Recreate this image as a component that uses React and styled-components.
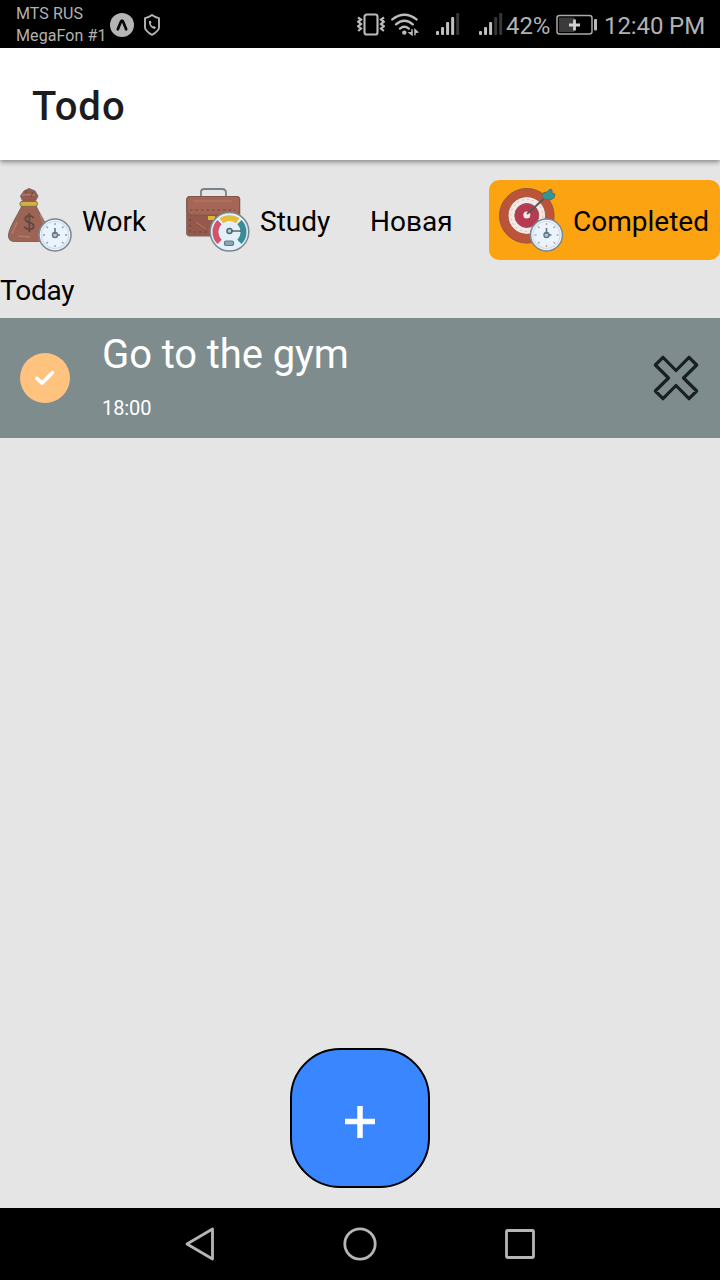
import React from "react";
import styled, { createGlobalStyle } from "styled-components";

const GlobalStyle = createGlobalStyle`
  * { box-sizing: border-box; }
  body { margin: 0; background: #e5e5e5; }
`;

const Screen = styled.div`
  display: flex;
  flex-direction: column;
  width: 720px;
  height: 1280px;
  overflow: hidden;
  background: #e5e5e5;
  color: #000;
  font-family: Roboto, "Liberation Sans", sans-serif;
`;

const StatusBar = styled.div`
  display: flex;
  align-items: center;
  flex: none;
  height: 48px;
  padding: 2px 0 0 16px;
  background: #000;
  color: #b2b2b2;
`;

const Carriers = styled.div`
  width: 94px;
  font-size: 16px;
  line-height: 22px;
  letter-spacing: 0.1px;
  white-space: nowrap;
`;

const Glyph = styled.svg`
  display: block;
  flex: none;
  margin-left: ${(p) => p.$gap || 0}px;
`;

const Spacer = styled.div`
  flex: 1;
`;

const StatusText = styled.span`
  flex: none;
  width: ${(p) => p.$width}px;
  padding: 1px 0 0 ${(p) => p.$inset}px;
  font-size: 24px;
  letter-spacing: -0.1px;
  line-height: 32px;
  white-space: nowrap;
`;

const Header = styled.header`
  display: flex;
  align-items: center;
  flex: none;
  height: 112px;
  padding: 6px 32px 0;
  background: #fff;
  box-shadow: 0 2px 5px rgba(0, 0, 0, 0.42);
`;

const Title = styled.h1`
  margin: 0;
  color: #1c1c1e;
  font-size: 40px;
  font-weight: 500;
  line-height: 48px;
  letter-spacing: 1px;
`;

const Tabs = styled.nav`
  display: flex;
  flex: none;
  height: 80px;
  margin: 20px 0 0 -2px;
`;

const Tab = styled.div`
  display: flex;
  flex: none;
  gap: 10px;
  width: ${(p) => p.$width}px;
  height: 80px;
  margin-right: ${(p) => p.$after || 0}px;
  padding: 8px 10px;
  border-radius: 10px;
  background: ${(p) => (p.$active ? "#fca311" : "transparent")};
`;

const TabLabel = styled.span`
  padding-top: 17px;
  font-size: 28px;
  line-height: 33px;
  white-space: nowrap;
`;

const SectionTitle = styled.h2`
  flex: none;
  height: 58px;
  margin: 0;
  padding-top: 14px;
  font-size: 28px;
  font-weight: 400;
  line-height: 33px;
  letter-spacing: -0.2px;
`;

const Task = styled.div`
  display: flex;
  align-items: center;
  flex: none;
  height: 120px;
  padding: 0 20px;
  background: #7f8c8d;
  color: #fff;
`;

const Check = styled.div`
  display: flex;
  align-items: center;
  justify-content: center;
  width: 50px;
  height: 50px;
  border-radius: 50%;
  background: #ffc37f;
`;

const TaskBody = styled.div`
  flex: 1;
  align-self: stretch;
  padding: 13px 0 0 32px;
`;

const TaskName = styled.div`
  font-size: 40px;
  line-height: 48px;
  letter-spacing: -0.1px;
`;

const TaskTime = styled.div`
  margin-top: 17px;
  font-size: 20px;
  line-height: 24px;
  letter-spacing: -0.1px;
`;

const Content = styled.main`
  display: flex;
  flex: 1;
  align-items: flex-end;
  justify-content: center;
  padding-bottom: 20px;
`;

const AddButton = styled.button`
  display: flex;
  align-items: center;
  justify-content: center;
  width: 140px;
  height: 140px;
  padding: 8px 0 0;
  border: 2px solid #000;
  border-radius: 50px;
  background: #3a86ff;
`;

const NavBar = styled.footer`
  display: flex;
  align-items: center;
  justify-content: center;
  gap: 120px;
  flex: none;
  height: 72px;
  background: #000;
`;

const ExpoIcon = () => (
  <Glyph width="24" height="24" viewBox="0 0 24 24">
    <circle cx="12" cy="12" r="12" fill="#b5b5b5" />
    <path d="M7.8 16.3 11 8.5q1-1.7 2 0l3.2 7.8" fill="none" stroke="#080808" strokeWidth="2.7" strokeLinecap="round" strokeLinejoin="round" />
  </Glyph>
);

const ShieldIcon = () => (
  <Glyph $gap={9} width="18" height="24" viewBox="0 0 18 24" fill="none" stroke="#b5b5b5">
    <path d="M9 2c2 1.6 4 2.5 7 3.1v9.4c0 3-3 5-7 7.4-4-2.4-7-4.4-7-7.4V5.1c3-.6 5-1.5 7-3.1Z" strokeWidth="1.9" strokeLinejoin="round" />
    <path d="M6.8 8c-.5 4 1.8 7 5.5 7.2" strokeWidth="1.5" />
    <path d="m6.8 8 .8 2.4M10 13.600l2.300 1.400" strokeWidth="2" />
  </Glyph>
);

const VibrateIcon = () => (
  <Glyph width="28" height="24" viewBox="0 0 28 24" fill="none" stroke="#bcbcbc">
    <rect x="7.5" y="1.5" width="13" height="20" rx="2.3" strokeWidth="2.1" />
    <path d="M1 4.500 4 6.500 1.200 8.800 4 11 1.200 13.300 4 15.600 1.200 18M27 4.500l-3 2 2.800 2.300L24 11l2.800 2.300-2.800 2.300 2.800 2.400" strokeWidth="2.200" />
  </Glyph>
);

const WifiIcon = () => (
  <Glyph $gap={6} width="28" height="24" viewBox="0 0 28 24" fill="none" stroke="#bcbcbc" strokeLinecap="round">
    <path d="M1.3 6.400Q13.400-3 25.500 6.400M5 11.300q8.400-7 16.800 0M9 15.600q4.400-3.600 8.800 0" strokeWidth="2.400" />
    <circle cx="13.300" cy="19.600" r="2.200" fill="#bcbcbc" stroke="none" />
    <path d="M21 16.800v5L18.500 19.800l2.500-.2M24 21.800v-5l2.500 2.300-2.500.5" strokeWidth="1.500" />
  </Glyph>
);

const SignalIcon = ({ gap, level }) => (
  <Glyph $gap={gap} width="24" height="24" viewBox="0 0 24 24">
    {[4, 8, 13, 18, 22].map((height, index) => (
      <rect
        key={height}
        x={index * 5.05}
        y={22 - height}
        width="3"
        height={height}
        rx="1"
        fill={index < level ? "#c1c1c1" : "#363636"}
      />
    ))}
  </Glyph>
);

const BatteryIcon = () => (
  <Glyph width="42" height="22" viewBox="0 0 42 22">
    <rect x="1" y="1.5" width="35" height="18.5" rx="2.5" fill="none" stroke="#aaa" strokeWidth="1.5" />
    <rect x="3" y="3.5" width="15.5" height="14.5" fill="#3b3b3b" />
    <path d="M18.500 5.500v11M13 11h11" stroke="#d2d2d2" strokeWidth="2.800" />
    <rect x="38" y="5" width="3" height="11.5" rx="1" fill="#bbb" />
  </Glyph>
);

const Clock = ({ cx, cy, r, tick = "#8d9bab" }) => (
  <g transform={`translate(${cx} ${cy})`}>
    <circle r={r} fill="#eaf4ff" stroke="#7b858e" strokeWidth="1.5" />
    <circle r={r - 2.5} fill="none" stroke="#d0dce8" strokeWidth="1.2" />
    {[0, 45, 90, 135, 180, 225, 270, 315].map((angle) => (
      <path key={angle} d={`M0 ${-r + 4}v2`} transform={`rotate(${angle})`} stroke={tick} strokeWidth="1.3" />
    ))}
    <circle r="2.5" fill="#b6c7d8" stroke="#637382" strokeWidth="1.4" />
    <path d="M0-1v-6M2 0h3" stroke="#637382" strokeWidth="1.6" />
  </g>
);

const MoneyBagIcon = () => (
  <Glyph width="64" height="64" viewBox="0 0 64 64">
    <path d="M14 18C10 27 2 38 .7 46c-.7 5 1.7 7.5 6 7.5h30c5 0 6.500-4 4.500-9C38.500 36 32 27 28 18Z" fill="#9d6355" stroke="#7d6962" strokeWidth="1.2" />
    <path d="M15 14 12.500 8 16 3l5-2.500L27 3l3 5-3 6Z" fill="#965b4d" stroke="#7d6962" />
    <path d="M14 7.500c5-2 9 0 13-1M9 34 4 46m28-20 5 15M10 48l12 1" fill="none" stroke="#b17b6b" strokeWidth="1.5" />
    <path d="M18 2v4m7-2-2 5" stroke="#704840" />
    <rect x="12" y="13.5" width="17.5" height="4.8" rx="2" fill="#d5ad49" stroke="#846e42" />
    <path d="M25.300 30c-1-3-8-3-8 1 0 5 8.300 2 8.300 7 0 4.500-7.600 4.500-9 .5M21.300 25v19" fill="none" stroke="#62483f" strokeWidth="1.9" />
    <Clock cx={47} cy={47} r={16} />
  </Glyph>
);

const BriefcaseIcon = () => (
  <Glyph width="64" height="64" viewBox="0 0 64 64">
    <path d="M15 8V4q0-3 3-3h18q4 0 4 4v3" fill="none" stroke="#78828a" strokeWidth="1.8" />
    <rect x=".7" y="8.5" width="53" height="39.5" rx="3" fill="#95594b" stroke="#7d6962" strokeWidth="1.2" />
    <path d="M1 11q0-2.500 3-2.500h46.500q3 0 3 2.500v11q0 5-6 5H7q-6 0-6-5Z" fill="#a66655" stroke="#7d554b" />
    <path d="M4 22h45M4 31v13h20" fill="none" stroke="#6d453e" strokeWidth="1.2" strokeDasharray="2.5 3" />
    <path d="M7 13h39M10 34l10 7" stroke="#b37968" />
    <rect x="22" y="28" width="7" height="4" fill="#e1b431" />
    <circle cx="43.5" cy="43.8" r="19.3" fill="#e4f0f8" stroke="#7b8791" strokeWidth="1.5" />
    <g fill="none" strokeWidth="6">
      <path d="M35.300 32.800a14 14 0 0 1 16.400 0" stroke="#e6bd3b" />
      <path d="M33.600 34.100a14 14 0 0 0 0 19.800" stroke="#d15269" />
      <path d="M53.400 34.100a14 14 0 0 1 0 19.800" stroke="#388b97" />
    </g>
    <circle cx="43.5" cy="43" r="2.5" fill="#bad0df" stroke="#526477" strokeWidth="1.5" />
    <path d="M46 43h9" stroke="#395361" strokeWidth="1.3" />
    <rect x="38.5" y="53" width="9" height="4.5" rx="1.5" fill="#8ca5b9" stroke="#637889" strokeWidth="1.2" />
  </Glyph>
);

const TargetIcon = () => (
  <Glyph width="64" height="64" viewBox="0 0 64 64">
    <circle cx="27.8" cy="27.8" r="27.3" fill="#bd543a" stroke="#8c5940" />
    <circle cx="27.8" cy="27.5" r="18.8" fill="#f3e9e5" stroke="#a05a49" />
    <circle cx="27.8" cy="27.5" r="16" fill="none" stroke="#dfb5b3" strokeDasharray="2 3" />
    <circle cx="27.8" cy="27.5" r="12" fill="#b53b50" stroke="#9d5260" />
    <circle cx="27.8" cy="27" r="3.5" fill="#f4e8e8" />
    <path d="M28 26 47 9" stroke="#53575b" strokeWidth="1.7" />
    <path d="m44 5 4-1 3-3 2 1v3l3 1-1 4-4 2-6-1-2-3Z" fill="#359494" stroke="#586f61" />
    <Clock cx={47.5} cy={47} r={16} tick="#b69b91" />
  </Glyph>
);

const CheckIcon = () => (
  <Glyph width="22" height="18" viewBox="0 0 22 18">
    <path d="m3 9.500 5 4.600L18.500 3.700" fill="none" stroke="#fff" strokeWidth="3.700" strokeLinecap="round" strokeLinejoin="round" />
  </Glyph>
);

const DeleteIcon = () => (
  <Glyph width="48" height="48" viewBox="0 0 48 48">
    <path d="M11 3.300 24 16.500 37 3.300 44.700 11 31.500 24l13.200 13-7.700 7.700L24 31.500 11 44.700 3.300 37l13.200-13L3.300 11Z" fill="none" stroke="#192021" strokeWidth="3.200" strokeLinejoin="round" />
  </Glyph>
);

const NavIcon = styled.svg`
  display: block;
  width: 40px;
  height: 40px;
  fill: none;
  stroke: #b5b5b5;
  stroke-width: 2.8;
  stroke-linejoin: round;
`;

export default function App() {
  return (
    <>
      <GlobalStyle />
      <Screen>
        <StatusBar>
          <Carriers>
            <div>MTS RUS</div>
            <div>MegaFon #1</div>
          </Carriers>
          <ExpoIcon />
          <ShieldIcon />
          <Spacer />
          <VibrateIcon />
          <WifiIcon />
          <SignalIcon gap={17} level={4} />
          <SignalIcon gap={19} level={3} />
          <StatusText $width={53} $inset={3}>42%</StatusText>
          <BatteryIcon />
          <StatusText $width={122} $inset={6}>12:40 PM</StatusText>
        </StatusBar>
        <Header>
          <Title>Todo</Title>
        </Header>
        <Tabs>
          <Tab $width={158} $after={20}>
            <MoneyBagIcon />
            <TabLabel>Work</TabLabel>
          </Tab>
          <Tab $width={164} $after={20}>
            <BriefcaseIcon />
            <TabLabel>Study</TabLabel>
          </Tab>
          <Tab $width={102} $after={27}>
            <TabLabel>Новая</TabLabel>
          </Tab>
          <Tab $width={231} $active>
            <TargetIcon />
            <TabLabel>Completed</TabLabel>
          </Tab>
        </Tabs>
        <SectionTitle>Today</SectionTitle>
        <Task>
          <Check>
            <CheckIcon />
          </Check>
          <TaskBody>
            <TaskName>Go to the gym</TaskName>
            <TaskTime>18:00</TaskTime>
          </TaskBody>
          <DeleteIcon />
        </Task>
        <Content>
          <AddButton aria-label="Add">
            <svg width="30" height="32" viewBox="0 0 30 32">
              <path d="M15 0v32M0 15.500h30" stroke="#fff" strokeWidth="5.500" />
            </svg>
          </AddButton>
        </Content>
        <NavBar>
          <NavIcon viewBox="0 0 40 40">
            <path d="M32.500 5v30L7 20Z" />
          </NavIcon>
          <NavIcon viewBox="0 0 40 40">
            <circle cx="20" cy="20" r="15.2" />
          </NavIcon>
          <NavIcon viewBox="0 0 40 40">
            <rect x="6.5" y="6.5" width="27" height="27" rx="1" />
          </NavIcon>
        </NavBar>
      </Screen>
    </>
  );
}
